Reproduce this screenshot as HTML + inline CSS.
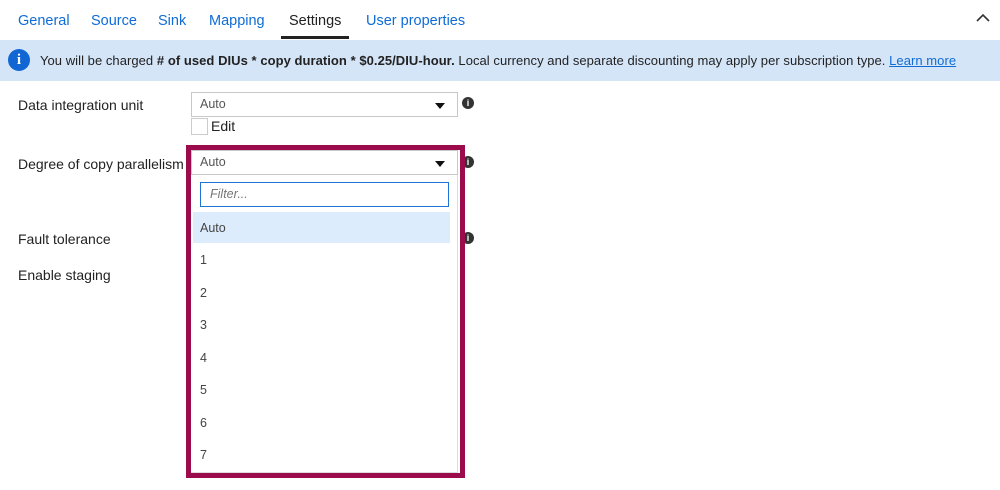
<!DOCTYPE html>
<html><head><style>
body{margin:0;width:1000px;height:490px;background:#fff;font-family:"Liberation Sans",sans-serif;position:relative;overflow:hidden;color:#222}
.a{position:absolute}
.tab{position:absolute;top:13px;font-size:14.5px;color:#0f6cd6}
.lbl{position:absolute;left:18px;font-size:14px;color:#222}
.sel{position:absolute;border:1px solid #c8c8c8;background:#fff;font-size:12.5px;color:#555;box-sizing:border-box;padding-left:8px}
.caret{position:absolute;right:12px;top:10px;width:0;height:0;border-left:5.5px solid transparent;border-right:5.5px solid transparent;border-top:6px solid #111}
.info{position:absolute;width:12px;height:12px;border-radius:50%;background:#333;color:#fff;font-size:9px;font-weight:bold;text-align:center;line-height:12px}
.it{position:absolute;left:200px;font-size:12.5px;color:#444}
</style></head><body>
<div class="tab" style="left:18px">General</div>
<div class="tab" style="left:91px">Source</div>
<div class="tab" style="left:158px">Sink</div>
<div class="tab" style="left:209px">Mapping</div>
<div class="tab" style="left:289px;color:#222">Settings</div>
<div class="a" style="left:281px;top:36px;width:68px;height:3px;background:#222"></div>
<div class="tab" style="left:366px">User properties</div>
<svg class="a" style="left:976px;top:13px" width="14" height="10"><path d="M1 8 L7 2 L13 8" stroke="#333" stroke-width="1.6" fill="none"/></svg>
<div class="a" style="left:0;top:40px;width:1000px;height:41px;background:#d5e5f8"></div>
<div class="a" style="left:8px;top:49px;width:22px;height:22px;border-radius:50%;background:#1067d4;color:#fff;font-weight:bold;font-size:15px;text-align:center;line-height:22px;font-family:'Liberation Serif',serif">i</div>
<div class="a" style="left:40px;top:53px;font-size:13px;color:#222;white-space:nowrap;letter-spacing:0.05px">You will be charged <b># of used DIUs * copy duration * $0.25/DIU-hour.</b> Local currency and separate discounting may apply per subscription type. <span style="color:#0f6cd6;text-decoration:underline">Learn more</span></div>
<div class="lbl" style="top:97px">Data integration unit</div>
<div class="sel" style="left:191px;top:92px;width:267px;height:25px;line-height:23px">Auto<div class="caret"></div></div>
<div class="info" style="left:462px;top:97px">i</div>
<div class="a" style="left:191px;top:118px;width:15px;height:15px;border:1px solid #ccc"></div>
<div class="a" style="left:211px;top:118px;font-size:14px">Edit</div>
<div class="lbl" style="top:156px">Degree of copy parallelism</div>
<div class="info" style="left:462px;top:156px">i</div>
<div class="lbl" style="top:231px">Fault tolerance</div>
<div class="info" style="left:462px;top:232px">i</div>
<div class="lbl" style="top:267px">Enable staging</div>
<div class="a" style="left:186px;top:145px;width:269px;height:323px;border:5px solid #9c0b4b;background:#fff"></div>
<div class="sel" style="left:191px;top:150px;width:267px;height:25px;line-height:23px">Auto<div class="caret"></div></div>
<div class="a" style="left:191px;top:175px;width:266px;height:297px;border-right:1px solid #ddd;border-bottom:1px solid #ddd"></div>
<div class="a" style="left:200px;top:182px;width:249px;height:25px;border:1px solid #1f73d6;box-sizing:border-box;font-size:12.5px;font-style:italic;color:#777;padding-left:9px;line-height:23px">Filter...</div>
<div class="a" style="left:193px;top:212px;width:257px;height:31px;background:#dcecfc"></div>
<div class="it" style="top:221px">Auto</div>
<div class="it" style="top:253px">1</div>
<div class="it" style="top:286px">2</div>
<div class="it" style="top:318px">3</div>
<div class="it" style="top:351px">4</div>
<div class="it" style="top:383px">5</div>
<div class="it" style="top:416px">6</div>
<div class="it" style="top:448px">7</div>
</body></html>
